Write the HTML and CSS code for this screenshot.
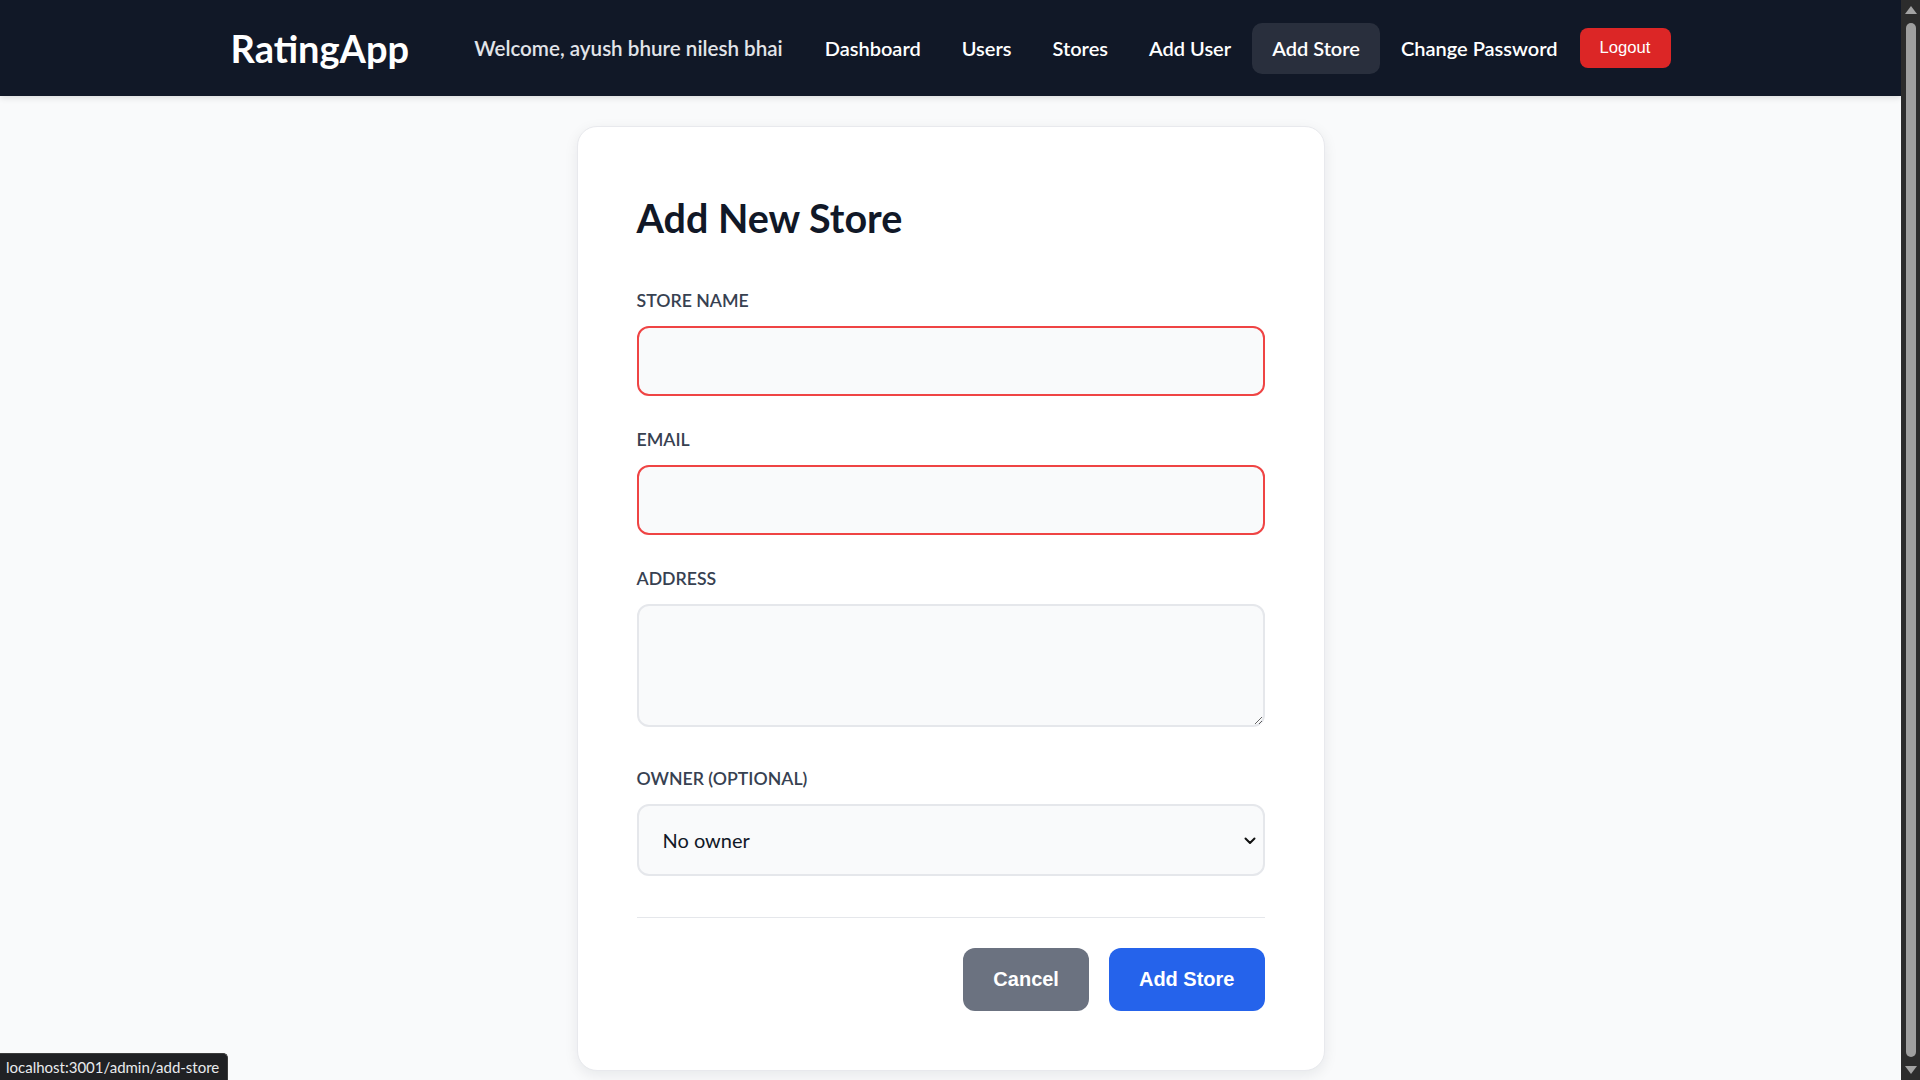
FILE: index.html
```html
<!DOCTYPE html>
<html lang="en">
<head>
<meta charset="utf-8">
<title>RatingApp - Add Store</title>
<link rel="stylesheet" href="styles.css">
</head>
<body>
<div class="screen">
  <div class="viewport">
    <header class="nav">
      <div class="nav-inner">
        <a class="brand" href="#">RatingApp</a>
        <nav class="nav-links">
          <span class="welcome">Welcome, ayush bhure nilesh bhai</span>
          <a class="nav-link" href="#">Dashboard</a>
          <a class="nav-link" href="#">Users</a>
          <a class="nav-link" href="#">Stores</a>
          <a class="nav-link" href="#">Add User</a>
          <a class="nav-link active" href="#">Add Store</a>
          <a class="nav-link" href="#">Change Password</a>
          <button class="logout" type="button">Logout</button>
        </nav>
      </div>
    </header>

    <main class="main">
      <section class="card">
        <h1 class="title">Add New Store</h1>
        <form class="form">
          <div class="field">
            <label class="label" for="name">Store Name</label>
            <input class="input invalid" id="name" type="text">
          </div>
          <div class="field">
            <label class="label" for="email">Email</label>
            <input class="input invalid" id="email" type="email">
          </div>
          <div class="field field-tall">
            <label class="label" for="address">Address</label>
            <textarea class="input textarea" id="address"></textarea>
          </div>
          <div class="field field-last">
            <label class="label" for="owner">Owner (Optional)</label>
            <div class="select-wrap">
              <select class="input select" id="owner">
                <option>No owner</option>
              </select>
              <svg class="chevron" width="12" height="8" viewBox="0 0 12 8" aria-hidden="true">
                <path d="M1.5 1.5 L6 6 L10.5 1.5" fill="none" stroke="#111111" stroke-width="2" stroke-linecap="round" stroke-linejoin="round"/>
              </svg>
            </div>
          </div>
          <div class="actions">
            <button class="btn btn-cancel" type="button">Cancel</button>
            <button class="btn btn-primary" type="submit">Add Store</button>
          </div>
        </form>
      </section>
    </main>

    <div class="status">localhost:3001/admin/add-store</div>
  </div>

  <div class="scrollbar">
    <div class="sb-arrow sb-up"></div>
    <div class="sb-track"><div class="sb-thumb"></div></div>
    <div class="sb-arrow sb-down"></div>
  </div>
</div>
</body>
</html>
```

FILE: styles.css
```css
* { box-sizing: border-box; }

html, body {
  margin: 0;
  padding: 0;
  height: 100%;
  overflow: hidden;
}

body {
  font-family: Lato, "Open Sans", "Noto Sans", sans-serif;
  background: #f9fafb;
  color: #111827;
}

.screen {
  display: flex;
  height: 100vh;
}

.viewport {
  flex: 1;
  min-width: 0;
  overflow: hidden;
  background: #f9fafb;
}

/* ---------- Nav ---------- */
.nav {
  background: #111827;
  height: 96px;
  box-shadow: 0 2px 6px rgba(0, 0, 0, 0.12);
  position: relative;
  z-index: 1;
}

.nav-inner {
  max-width: 1440px;
  height: 100%;
  margin: 0 auto;
  display: flex;
  align-items: center;
  justify-content: space-between;
}

.brand {
  color: #ffffff;
  font-size: 38px;
  font-weight: 700;
  text-decoration: none;
  line-height: 44px;
}

.nav-links {
  display: flex;
  align-items: center;
  gap: 1px;
}

.welcome {
  color: #e2e4e9;
  font-size: 20.6px;
  font-weight: 600;
  line-height: 27px;
  margin-right: 21px;
}

.nav-link {
  color: #ffffff;
  font-size: 20px;
  font-weight: 600;
  line-height: 27px;
  padding: 12px 20px;
  border-radius: 10px;
  text-decoration: none;
}

.nav-link.active {
  background: rgba(255, 255, 255, 0.1);
}

.logout {
  margin-left: 1px;
  height: 40px;
  padding: 0 20px;
  border: 0;
  border-radius: 8px;
  background: #dc2626;
  color: #ffffff;
  font-family: "Liberation Sans", Arial, sans-serif;
  font-size: 16.67px;
  line-height: 40px;
}

/* ---------- Card ---------- */
.main {
  padding: 30px 0;
}

.card {
  width: 748px;
  margin: 0 auto;
  background: #ffffff;
  border: 1px solid #e8e9ed;
  border-radius: 20px;
  padding: 59px;
  box-shadow: 0 4px 14px rgba(17, 24, 39, 0.08);
}

.title {
  margin: 0 0 39px;
  font-size: 39.5px;
  font-weight: 700;
  line-height: 63px;
  color: #111827;
}

.form {
  display: flex;
  flex-direction: column;
}

.field {
  display: flex;
  flex-direction: column;
  margin-bottom: 31px;
}

.field-tall { margin-bottom: 39px; }
.field-last { margin-bottom: 41px; }

.label {
  font-size: 17.7px;
  font-weight: 600;
  line-height: 26px;
  text-transform: uppercase;
  color: #374151;
  margin-bottom: 12px;
}

.input {
  display: block;
  width: 100%;
  height: 70px;
  padding: 20px 24px;
  border: 2px solid #e5e7eb;
  border-radius: 12px;
  background: #f9fafb;
  font-family: Lato, "Open Sans", sans-serif;
  font-size: 20px;
  color: #111827;
  outline: none;
}

.input.invalid {
  border-color: #ef4444;
}

.textarea {
  height: 123px;
  resize: vertical;
}

.select-wrap {
  position: relative;
}

.select {
  height: 72px;
  padding: 0 48px 0 24px;
  appearance: none;
  -webkit-appearance: none;
  line-height: 68px;
}

.chevron {
  position: absolute;
  right: 9px;
  top: 33px;
}

.actions {
  border-top: 1px solid #e5e7eb;
  padding-top: 30px;
  display: flex;
  justify-content: flex-end;
  gap: 20px;
}

.btn {
  border: 0;
  border-radius: 12px;
  padding: 20px 30px;
  font-family: "Liberation Sans", Arial, sans-serif;
  font-size: 20px;
  font-weight: 700;
  line-height: 23px;
  color: #ffffff;
}

.btn-cancel { background: #6b7280; }
.btn-primary { background: #2563eb; }

/* ---------- Status bubble (browser overlay) ---------- */
.status {
  position: fixed;
  left: 0;
  bottom: 0;
  height: 27px;
  padding: 0 8px 0 6px;
  background: #202124;
  border-top: 1px solid #3c3c3c;
  border-right: 1px solid #3c3c3c;
  border-top-right-radius: 5px;
  color: #e8eaed;
  font-family: Lato, "Open Sans", sans-serif;
  font-size: 15px;
  line-height: 26px;
  z-index: 5;
}

/* ---------- Scrollbar ---------- */
.scrollbar {
  width: 19px;
  flex: none;
  background: #2c2c2c;
  display: flex;
  flex-direction: column;
  align-items: center;
}

.sb-arrow {
  width: 0;
  height: 0;
  border-left: 6px solid transparent;
  border-right: 6px solid transparent;
  flex: none;
}

.sb-up {
  margin-top: 6px;
  border-bottom: 8px solid #a3a3a3;
}

.sb-down {
  margin-bottom: 6px;
  border-top: 8px solid #a3a3a3;
}

.sb-track {
  flex: 1;
  width: 100%;
  display: flex;
  justify-content: center;
  padding: 9px 0 9px;
}

.sb-thumb {
  width: 10px;
  height: 100%;
  border-radius: 5px;
  background: #9f9f9f;
}
```
